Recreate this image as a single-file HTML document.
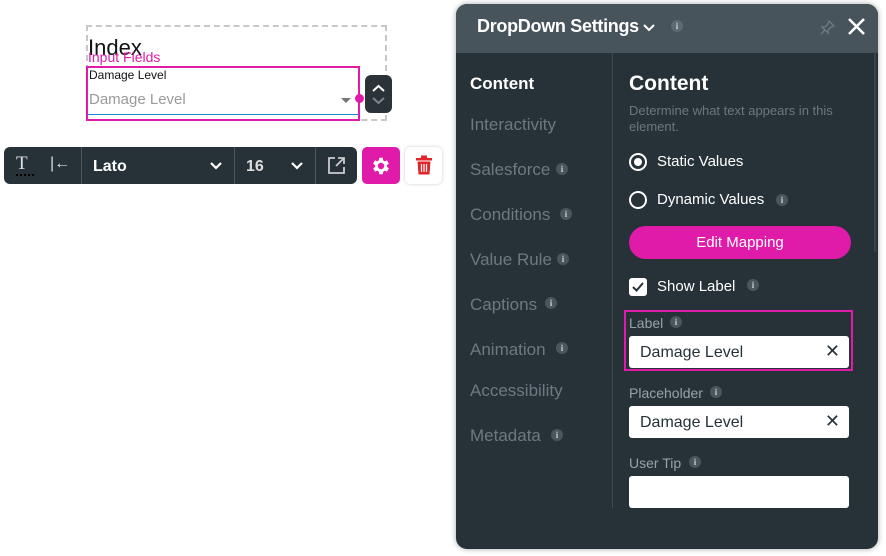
<!DOCTYPE html>
<html><head><meta charset="utf-8"><style>
*{margin:0;padding:0;box-sizing:border-box}
body{width:886px;height:556px;background:#fff;font-family:"Liberation Sans",sans-serif;position:relative;overflow:hidden}
.a{position:absolute}
.info{position:absolute;width:12px;height:12px;border-radius:50%;background:#4a555c;color:#c9ced1;font-size:9px;line-height:12px;text-align:center;font-family:"Liberation Serif",serif;font-weight:bold}
.nav{position:absolute;left:470px;color:#6f787e;font-size:17px}
.lbl{position:absolute;left:629px;color:#9aa2a7;font-size:14px}
.inp{position:absolute;left:629px;width:220px;height:32px;background:#fff;border-radius:3px;color:#263238;font-size:16px;padding:8px 0 0 11px}
.x{position:absolute;right:9px;top:5px;font-size:18px;color:#263238}
</style></head><body>
<div class="a" style="left:86px;top:25px;width:301px;height:96px;border:2px dashed #c8c8c8"></div>
<div class="a" style="left:88px;top:35px;font-size:22px;color:#111">Index</div>
<div class="a" style="left:88px;top:49px;font-size:14px;color:#e01aa9">Input Fields</div>
<div class="a" style="left:86px;top:66px;width:274px;height:55px;border:2px solid #e01aa9;background:transparent"></div>
<div class="a" style="left:89px;top:68px;font-size:12px;color:#111">Damage Level</div>
<div class="a" style="left:89px;top:91px;font-size:15px;color:#9a9a9a">Damage Level</div>
<div class="a" style="left:341px;top:98px;width:0;height:0;border-left:5px solid transparent;border-right:5px solid transparent;border-top:5px solid #777"></div>
<div class="a" style="left:88px;top:114px;width:270px;height:1px;background:#1f86d8"></div>
<div class="a" style="left:355px;top:94px;width:9px;height:9px;border-radius:50%;background:#e01aa9"></div>
<div class="a" style="left:365px;top:75px;width:27px;height:38px;border-radius:6px;background:#2b3338"></div>
<svg class="a" style="left:365px;top:75px" width="27" height="38"><path d="M8 16 L13.5 11 L19 16" stroke="#fff" stroke-width="2" fill="none"/><path d="M8 23 L13.5 28 L19 23" stroke="#7d868b" stroke-width="2" fill="none"/></svg>
<div class="a" style="left:4px;top:147px;width:353px;height:37px;background:#263238;border-radius:6px"></div>
<div class="a" style="left:81px;top:147px;width:1px;height:37px;background:#4c575d"></div>
<div class="a" style="left:234px;top:147px;width:1px;height:37px;background:#4c575d"></div>
<div class="a" style="left:315px;top:147px;width:1px;height:37px;background:#4c575d"></div>
<div class="a" style="left:16px;top:153px;color:#ddd;font-family:'Liberation Serif',serif;font-size:19px">T</div>
<div class="a" style="left:16px;top:174px;width:18px;height:2px;border-bottom:2px dotted #000"></div>
<div class="a" style="left:50px;top:155px;color:#ddd;font-size:16px">|←</div>
<div class="a" style="left:93px;top:158px;color:#fff;font-size:16px;font-weight:bold">Lato</div>
<svg class="a" style="left:208px;top:158px" width="16" height="16"><path d="M3 5 L8 10 L13 5" stroke="#fff" stroke-width="2.2" fill="none"/></svg>
<div class="a" style="left:246px;top:158px;color:#ddd;font-size:16px;font-weight:bold">16</div>
<svg class="a" style="left:289px;top:158px" width="16" height="16"><path d="M3 5 L8 10 L13 5" stroke="#fff" stroke-width="2.2" fill="none"/></svg>
<svg class="a" style="left:327px;top:156px" width="19" height="19"><path d="M8 2 H2 V17 H17 V11" stroke="#ccc" stroke-width="1.8" fill="none"/><path d="M11 2 H17 V8 M17 2 L9 10" stroke="#ccc" stroke-width="1.8" fill="none"/></svg>
<div class="a" style="left:362px;top:147px;width:38px;height:37px;background:#e01aa9;border-radius:5px"></div>
<svg class="a" style="left:370px;top:155px" width="22" height="22" viewBox="0 0 24 24"><path fill="#fff" d="M19.4 13a7.7 7.7 0 0 0 0-2l2.1-1.6-2-3.5-2.5 1a7.5 7.5 0 0 0-1.700-1L15 3h-4l-.4 2.9a7.5 7.5 0 0 0-1.7 1l-2.5-1-2 3.5L6.6 11a7.7 7.7 0 0 0 0 2l-2.1 1.6 2 3.5 2.5-1c.5.4 1.1.7 1.7 1L11 21h4l.4-2.9c.6-.3 1.200-.6 1.7-1l2.5 1 2-3.5zM13 15.5a3.5 3.5 0 1 1 0-7 3.5 3.5 0 0 1 0 7z" transform="translate(-1 0)"/></svg>
<div class="a" style="left:405px;top:147px;width:37px;height:37px;background:#fff;border-radius:5px;box-shadow:0 0 3px rgba(0,0,0,.2)"></div>
<svg class="a" style="left:415px;top:155px" width="18" height="20"><rect x="1" y="3" width="16" height="2.5" fill="#e0262b"/><rect x="6" y="0.5" width="6" height="3" fill="#e0262b"/><path d="M2.5 6.5 H15.5 L14.5 19.5 H3.5 Z" fill="#e0262b"/><path d="M6.5 9 V17 M9 9 V17 M11.5 9 V17" stroke="#fff" stroke-width="1.2"/></svg>
<div class="a" style="left:456px;top:4px;width:422px;height:545px;border-radius:11px;background:#263238;box-shadow:0 0 6px rgba(0,0,0,.35);overflow:hidden">
 <div class="a" style="left:0;top:0;width:422px;height:49px;background:#47545b"></div>
</div>
<div class="a" style="left:477px;top:16px;color:#fff;font-size:18px;font-weight:bold;letter-spacing:-0.3px">DropDown Settings</div>
<svg class="a" style="left:642px;top:20px" width="14" height="14"><path d="M2 5 L7 10 L12 5" stroke="#fff" stroke-width="2" fill="none"/></svg>
<div class="info" style="left:671px;top:20px;background:#5e6a71">i</div>
<svg class="a" style="left:820px;top:19px" width="16" height="16"><path d="M9 2 L14 7 L11 8 L8 11 L8 14 L2 8 L5 8 L8 5 Z M5 11 L1 15" stroke="#6f7b82" stroke-width="1.3" fill="none"/></svg>
<svg class="a" style="left:847px;top:17px" width="19" height="19"><path d="M2 2 L17 17 M17 2 L2 17" stroke="#fff" stroke-width="2.6"/></svg>
<div class="a" style="left:612px;top:52px;width:1px;height:456px;background:#3e4a50"></div>
<div class="a" style="left:874px;top:52px;width:2px;height:200px;background:#3a454b"></div>
<div class="a" style="left:470px;top:74px;color:#fff;font-size:17px;font-weight:bold">Content</div>
<div class="nav" style="top:115px">Interactivity</div>
<div class="nav" style="top:160px">Salesforce</div><div class="info" style="left:556px;top:163px">i</div>
<div class="nav" style="top:205px">Conditions</div><div class="info" style="left:560px;top:208px">i</div>
<div class="nav" style="top:250px">Value Rule</div><div class="info" style="left:557px;top:253px">i</div>
<div class="nav" style="top:295px">Captions</div><div class="info" style="left:545px;top:297px">i</div>
<div class="nav" style="top:340px">Animation</div><div class="info" style="left:556px;top:342px">i</div>
<div class="nav" style="top:381px">Accessibility</div>
<div class="nav" style="top:426px">Metadata</div><div class="info" style="left:551px;top:429px">i</div>
<div class="a" style="left:629px;top:72px;color:#fff;font-size:21px;font-weight:bold">Content</div>
<div class="a" style="left:629px;top:103px;color:#6c777d;font-size:13px;line-height:16px;width:220px">Determine what text appears in this element.</div>
<div class="a" style="left:629px;top:153px;width:18px;height:18px;border:2px solid #fff;border-radius:50%"></div>
<div class="a" style="left:634px;top:158px;width:8px;height:8px;background:#fff;border-radius:50%"></div>
<div class="a" style="left:657px;top:153px;color:#fff;font-size:15px">Static Values</div>
<div class="a" style="left:629px;top:191px;width:18px;height:18px;border:2px solid #fff;border-radius:50%"></div>
<div class="a" style="left:657px;top:191px;color:#fff;font-size:15px">Dynamic Values</div><div class="info" style="left:776px;top:194px">i</div>
<div class="a" style="left:629px;top:226px;width:222px;height:33px;background:#e01aa9;border-radius:17px;color:#fff;font-size:15px;text-align:center;line-height:33px">Edit Mapping</div>
<div class="a" style="left:629px;top:278px;width:18px;height:18px;background:#fff;border-radius:3px"></div>
<svg class="a" style="left:629px;top:278px" width="18" height="18"><path d="M4 9 L7.5 12.5 L14 5" stroke="#263238" stroke-width="2" fill="none"/></svg>
<div class="a" style="left:657px;top:278px;color:#fff;font-size:15px">Show Label</div><div class="info" style="left:747px;top:279px">i</div>
<div class="a" style="left:624px;top:310px;width:229px;height:61px;border:2px solid #e01aa9"></div>
<div class="lbl" style="top:315px">Label</div><div class="info" style="left:670px;top:316px">i</div>
<div class="inp" style="top:336px">Damage Level<span class="x">✕</span></div>
<div class="lbl" style="top:385px">Placeholder</div><div class="info" style="left:710px;top:386px">i</div>
<div class="inp" style="top:406px">Damage Level<span class="x">✕</span></div>
<div class="lbl" style="top:455px">User Tip</div><div class="info" style="left:689px;top:456px">i</div>
<div class="inp" style="top:476px"></div>
</body></html>
